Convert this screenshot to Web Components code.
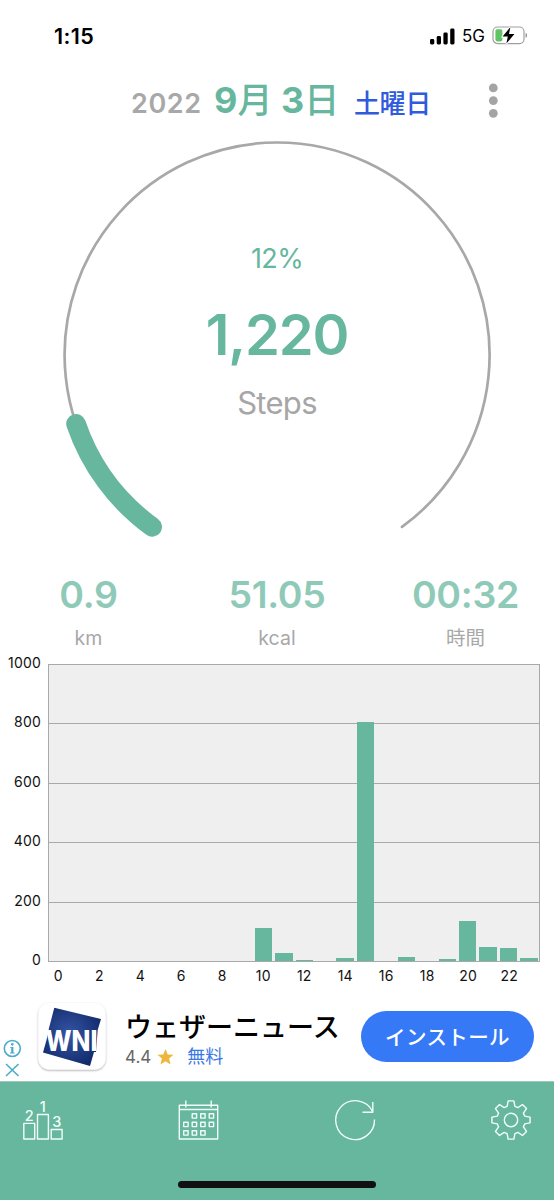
<!DOCTYPE html>
<html lang="ja">
<head>
<meta charset="utf-8">
<title>Steps</title>
<style>
  body {
    margin: 0;
    width: 554px;
    height: 1200px;
    overflow: hidden;
    background: #fff;
    font-family: Inter, "Noto Sans CJK JP", sans-serif;
    --green: #67b69e;
    --gray: #a8a8a8;
  }
</style>
</head>
<body>
<step-app></step-app>

<script>
// small helper: every element here only needs an open shadow root with markup
class BaseElement extends HTMLElement {
  constructor() {
    super();
    this.shadow = this.attachShadow({ mode: "open" });
  }
  connectedCallback() {
    this.shadow.innerHTML = this.render();
  }
}

class StatusBar extends BaseElement {
  render() {
    return `
    <style>
      :host { display: flex; align-items: center; height: 72px; padding: 0 26px 0 54px; box-sizing: border-box; }
      .time { flex: 1; font-size: 21.5px; font-weight: 600; line-height: 71px; letter-spacing: 0.4px; color: #000; }
      .net { font-size: 17px; line-height: 74px; margin: 0 7px 0 7px; letter-spacing: 0; }
      svg { display: block; }
    </style>
    <span class="time">1:15</span>
    <svg width="25" height="17" viewBox="0 0 25 17">
      <rect x="0" y="11" width="4.3" height="5.5" rx="1.4"/>
      <rect x="6.7" y="8" width="4.3" height="8.5" rx="1.4"/>
      <rect x="13.4" y="4.5" width="4.3" height="12" rx="1.4"/>
      <rect x="20.2" y="0.5" width="4.3" height="16" rx="1.4"/>
    </svg>
    <span class="net">5G</span>
    <svg width="36" height="22" viewBox="0 0 36 22">
      <rect x="1" y="2" width="31" height="16.6" rx="4.5" fill="none" stroke="#a0a0a0" stroke-width="1.2"/>
      <path d="M33.6 7.8c1.9.8 1.9 4.400 0 5.200z" fill="#8c8c8c"/>
      <rect x="3.4" y="4.2" width="7" height="12.2" rx="1.8" fill="#5fc466"/>
      <path d="M18.400 2L10.600 11.500h5.200L14.400 18.600L22.400 8.900h-5.400z" fill="#000" stroke="#fff" stroke-width="1.800" paint-order="stroke"/>
    </svg>`;
  }
}

class DateHeader extends BaseElement {
  render() {
    return `
    <style>
      :host { display: flex; align-items: baseline; height: 58px; padding-left: 131px; line-height: 57px; font-weight: 700; white-space: nowrap; }
      .year { width: 83px; font-size: 27px; font-weight: 600; color: var(--gray); letter-spacing: 0.6px; }
      .day { width: 140px; font-size: 36px; color: var(--green); }
      .day i { font-style: normal; font-size: 35px; font-weight: 500; }
      .week { width: 128px; font-size: 26px; font-weight: 500; color: #2f5bdc; letter-spacing: -0.4px; }
      svg { display: block; align-self: center; }
    </style>
    <span class="year">2022</span>
    <span class="day">9<i>月</i> 3<i>日</i></span>
    <span class="week">土曜日</span>
    <svg width="20" height="36" viewBox="0 0 20 36" fill="#a4a4a4">
      <circle cx="11.3" cy="4.9" r="4.4"/><circle cx="11.3" cy="17.6" r="4.4"/><circle cx="11.3" cy="30.3" r="4.4"/>
    </svg>`;
  }
}

class StepRing extends BaseElement {
  // point on the ring, angle in degrees clockwise from 3 o'clock
  point(deg) {
    const a = (deg * Math.PI) / 180;
    return (277.1 + 212.5 * Math.cos(a)).toFixed(2) + " " + (225 + 212.5 * Math.sin(a)).toFixed(2);
  }
  render() {
    const start = 126;
    const sweep = 288;
    const end = start + sweep * (Number(this.getAttribute("value")) / Number(this.getAttribute("goal")));
    return `
    <style>
      :host { display: grid; height: 430px; }
      svg, .label { grid-area: 1 / 1; }
      svg { display: block; }
      .label { display: flex; flex-direction: column; align-items: center; padding-top: 109px; }
      .percent { font-size: 27px; font-weight: 400; line-height: 40px; color: var(--green); letter-spacing: -0.6px; }
      .count { margin-top: 26px; font-size: 56px; font-weight: 600; line-height: 60px; color: var(--green); letter-spacing: -1.2px; }
      .unit { margin-top: 18px; font-size: 31px; font-weight: 400; line-height: 40px; color: #a6a6a6; letter-spacing: -0.7px; }
    </style>
    <svg width="554" height="430" viewBox="0 0 554 430" fill="none" stroke-linecap="round">
      <path d="M${this.point(start)}A212.5 212.5 0 1 1 ${this.point(start + sweep)}" stroke="#a8a8a8" stroke-width="2.7"/>
      <path d="M${this.point(start)}A212.5 212.5 0 0 1 ${this.point(end)}" stroke="#67b69e" stroke-width="19.6"/>
    </svg>
    <div class="label">
      <span class="percent"><slot name="percent"></slot></span>
      <span class="count"><slot></slot></span>
      <span class="unit"><slot name="unit"></slot></span>
    </div>`;
  }
}

class StatItem extends BaseElement {
  render() {
    return `
    <style>
      :host { display: flex; flex: none; flex-direction: column; align-items: center; width: 188.5px; }
      .value { font-size: 37.5px; font-weight: 600; line-height: 44px; color: #8fcab8; letter-spacing: -0.3px; }
      .unit { margin-top: 6px; font-size: 19.5px; font-weight: 400; line-height: 30px; color: #a8a8a8; }
    </style>
    <span class="value"><slot></slot></span>
    <span class="unit">${this.getAttribute("unit")}</span>`;
  }
}

class HourChart extends BaseElement {
  render() {
    const values = this.getAttribute("values").split(",").map(Number);
    const ticks = [1000, 800, 600, 400, 200, 0];
    return `
    <style>
      :host { display: grid; grid-template-columns: 41px 492px; grid-template-rows: 307px 29px; column-gap: 7px; height: 336px; font-size: 14px; color: #111; }
      .y { display: flex; flex-direction: column; justify-content: space-between; height: 317px; text-align: right; line-height: 20px; margin-top: -2px; letter-spacing: 0.2px; }
      .plot { display: flex; align-items: flex-end; box-sizing: border-box; height: 298px; margin-top: 9px; border: 1px solid #a9a9a9;
        background: repeating-linear-gradient(#efefef 0 58.4px, #a9a9a9 58.4px 59.4px); }
      .slot { flex: 1; display: flex; justify-content: center; align-items: flex-end; height: 297px; }
      .bar { width: 17.4px; background: var(--green); }
      .x { grid-column: 2; display: flex; height: 28px; line-height: 28px; letter-spacing: 0.2px; }
      .x span { flex: 1; width: 0; display: flex; justify-content: center; }
    </style>
    <div class="y">${ticks.map((t) => `<span>${t}</span>`).join("")}</div>
    <div class="plot">${values.map((v) => `<div class="slot"><div class="bar" style="height:${v * 0.297}px"></div></div>`).join("")}</div>
    <div class="x">${values.map((v, i) => `<span>${i % 2 ? "" : i}</span>`).join("")}</div>`;
  }
}

class AppAd extends BaseElement {
  render() {
    return `
    <style>
      :host { display: flex; height: 90px; box-sizing: border-box; }
      svg { display: block; }
      .choices { width: 35px; padding-top: 48px; }
      .logo { width: 90px; padding-top: 9px; }
      .text { width: 236px; padding-top: 15px; white-space: nowrap; }
      .title { font-size: 27px; font-weight: 500; line-height: 43px; color: #000; }
      .info { display: flex; align-items: center; line-height: 16px; font-size: 17px; color: #666; }
      .info svg { margin: 0 13px 0 6px; }
      .info b { font-weight: 400; font-size: 18px; color: #3b78e7; }
      .install { width: 173px; height: 51px; margin-top: 20px; border-radius: 26px; background: #3579f6; color: #fff;
        font-size: 20.5px; font-weight: 500; line-height: 53px; text-align: center; letter-spacing: 0.4px; }
    </style>
    <div class="choices">
      <svg width="24" height="42" viewBox="0 0 24 42" fill="none" stroke="#4babca" stroke-width="1.6">
        <circle cx="12.3" cy="9.5" r="8"/>
        <path d="M12.3 8v6" stroke-width="2.2"/>
        <path d="M10.4 8.500h2M10 14h4.600" stroke-width="1"/>
        <path d="M6 25l12.500 12M18.500 25L6 37"/>
        <circle cx="12.3" cy="5.3" r=".6"/>
      </svg>
    </div>
    <div class="logo">
      <svg width="76" height="76" viewBox="0 0 76 76">
        <defs>
          <radialGradient id="sky" cx=".45" cy=".45" r=".6"><stop offset="0" stop-color="#3556a5"/><stop offset="1" stop-color="#122a6b"/></radialGradient>
          <filter id="drop" x="-.2" y="-.2" width="1.4" height="1.4"><feDropShadow dx="0" dy="1" stdDeviation="1.2" flood-opacity=".35"/></filter>
        </defs>
        <rect x="3.5" y="3" width="67" height="66.5" rx="11" fill="#fff" filter="url(#drop)"/>
        <path d="M19.300 7.800L66 19L62.700 30L61 52H59L55 66L8 52.500L11.500 40L14 28z" fill="url(#sky)"/>
        <text x="0" y="0" textLength="52" lengthAdjust="spacingAndGlyphs" transform="translate(10.500 51)" font-family="Inter" font-size="29" font-weight="800" fill="#fff">WNI</text>
      </svg>
    </div>
    <div class="text">
      <div class="title">ウェザーニュース</div>
      <div class="info"><span>4.4</span>
        <svg width="17" height="16" viewBox="0 0 17 16"><path d="M8.500 0l2.200 5.400 5.800.4-4.400 3.800 1.400 5.900-5-3.200-5 3.200 1.400-5.900L.5 5.800l5.800-.4z" fill="#edb63e"/></svg>
        <b>無料</b></div>
    </div>
    <div class="install">インストール</div>`;
  }
}

class TabBar extends BaseElement {
  // eight-toothed cog outline
  gear() {
    const pts = [];
    for (let i = 0; i < 8; i++) {
      [[-16, 14.2], [-8.5, 19.3], [8.5, 19.3], [16, 14.2]].forEach(([d, r]) => {
        const a = ((i * 45 + d) * Math.PI) / 180;
        pts.push((20 + r * Math.cos(a)).toFixed(2) + " " + (20 + r * Math.sin(a)).toFixed(2));
      });
    }
    return "M" + pts.join("L") + "z";
  }
  render() {
    const days = [[1, 0], [2, 0], [3, 0], [0, 1], [1, 1], [2, 1], [3, 1], [0, 2], [1, 2], [2, 2]];
    return `
    <style>
      :host { display: flex; flex-direction: column; box-sizing: border-box; height: 119px; border-top: 1px solid #9fc6b9; background: var(--green); }
      nav { display: flex; justify-content: space-between; height: 99px; padding: 18px 22.5px 0; box-sizing: border-box; }
      svg { display: block; fill: none; stroke: #f0fff8; stroke-width: 1.4; stroke-linejoin: round; overflow: visible; }
      text { fill: #f0fff8; stroke: none; font: 500 14.5px Inter, sans-serif; text-anchor: middle; }
      .home { width: 198px; height: 7px; margin: 0 auto; border-radius: 4px; background: #111; }
    </style>
    <nav>
      <svg width="40" height="40">
        <rect x=".8" y="23.4" width="10.9" height="15.6"/>
        <rect x="14.5" y="14.5" width="10.9" height="24.5"/>
        <rect x="28.2" y="29.5" width="10.9" height="9.5"/>
        <text x="6.3" y="21">2</text><text x="19.8" y="12">1</text><text x="33.8" y="27">3</text>
      </svg>
      <svg width="40" height="40">
        <rect x=".3" y="5.2" width="38.4" height="33.8"/>
        <path d="M.3 9.500h38.400M6.800.5v7M32.200.5v7"/>
        ${days.map(([x, y]) => `<rect x="${4.7 + x * 8.5}" y="${13.7 + y * 8.5}" width="4.4" height="4.4"/>`).join("")}
      </svg>
      <svg width="40" height="40">
        <path d="M39.500 19.500A19.400 19.400 0 1 1 37.500 11.500M37.800 2v10.300H27.500"/>
      </svg>
      <svg width="40" height="40">
        <path d="${this.gear()}"/><circle cx="20" cy="20" r="6.7"/>
      </svg>
    </nav>
    <div class="home"></div>`;
  }
}

class StepApp extends BaseElement {
  render() {
    return `
    <style>
      :host { display: flex; flex-direction: column; width: 554px; height: 1200px; }
      .stats { display: flex; justify-content: center; height: 82px; padding-top: 13px; box-sizing: content-box; }
    </style>
    <status-bar></status-bar>
    <date-header></date-header>
    <step-ring value="1220" goal="10000">
      <span slot="percent">12%</span>1,220<span slot="unit">Steps</span>
    </step-ring>
    <div class="stats">
      <stat-item unit="km">0.9</stat-item>
      <stat-item unit="kcal">51.05</stat-item>
      <stat-item unit="時間">00:32</stat-item>
    </div>
    <hour-chart values="0,0,0,0,0,0,0,0,0,0,111,28,4,0,9,804,0,14,0,7,134,47,44,9"></hour-chart>
    <app-ad></app-ad>
    <tab-bar></tab-bar>`;
  }
}

customElements.define("status-bar", StatusBar);
customElements.define("date-header", DateHeader);
customElements.define("step-ring", StepRing);
customElements.define("stat-item", StatItem);
customElements.define("hour-chart", HourChart);
customElements.define("app-ad", AppAd);
customElements.define("tab-bar", TabBar);
customElements.define("step-app", StepApp);
</script>
</body>
</html>
